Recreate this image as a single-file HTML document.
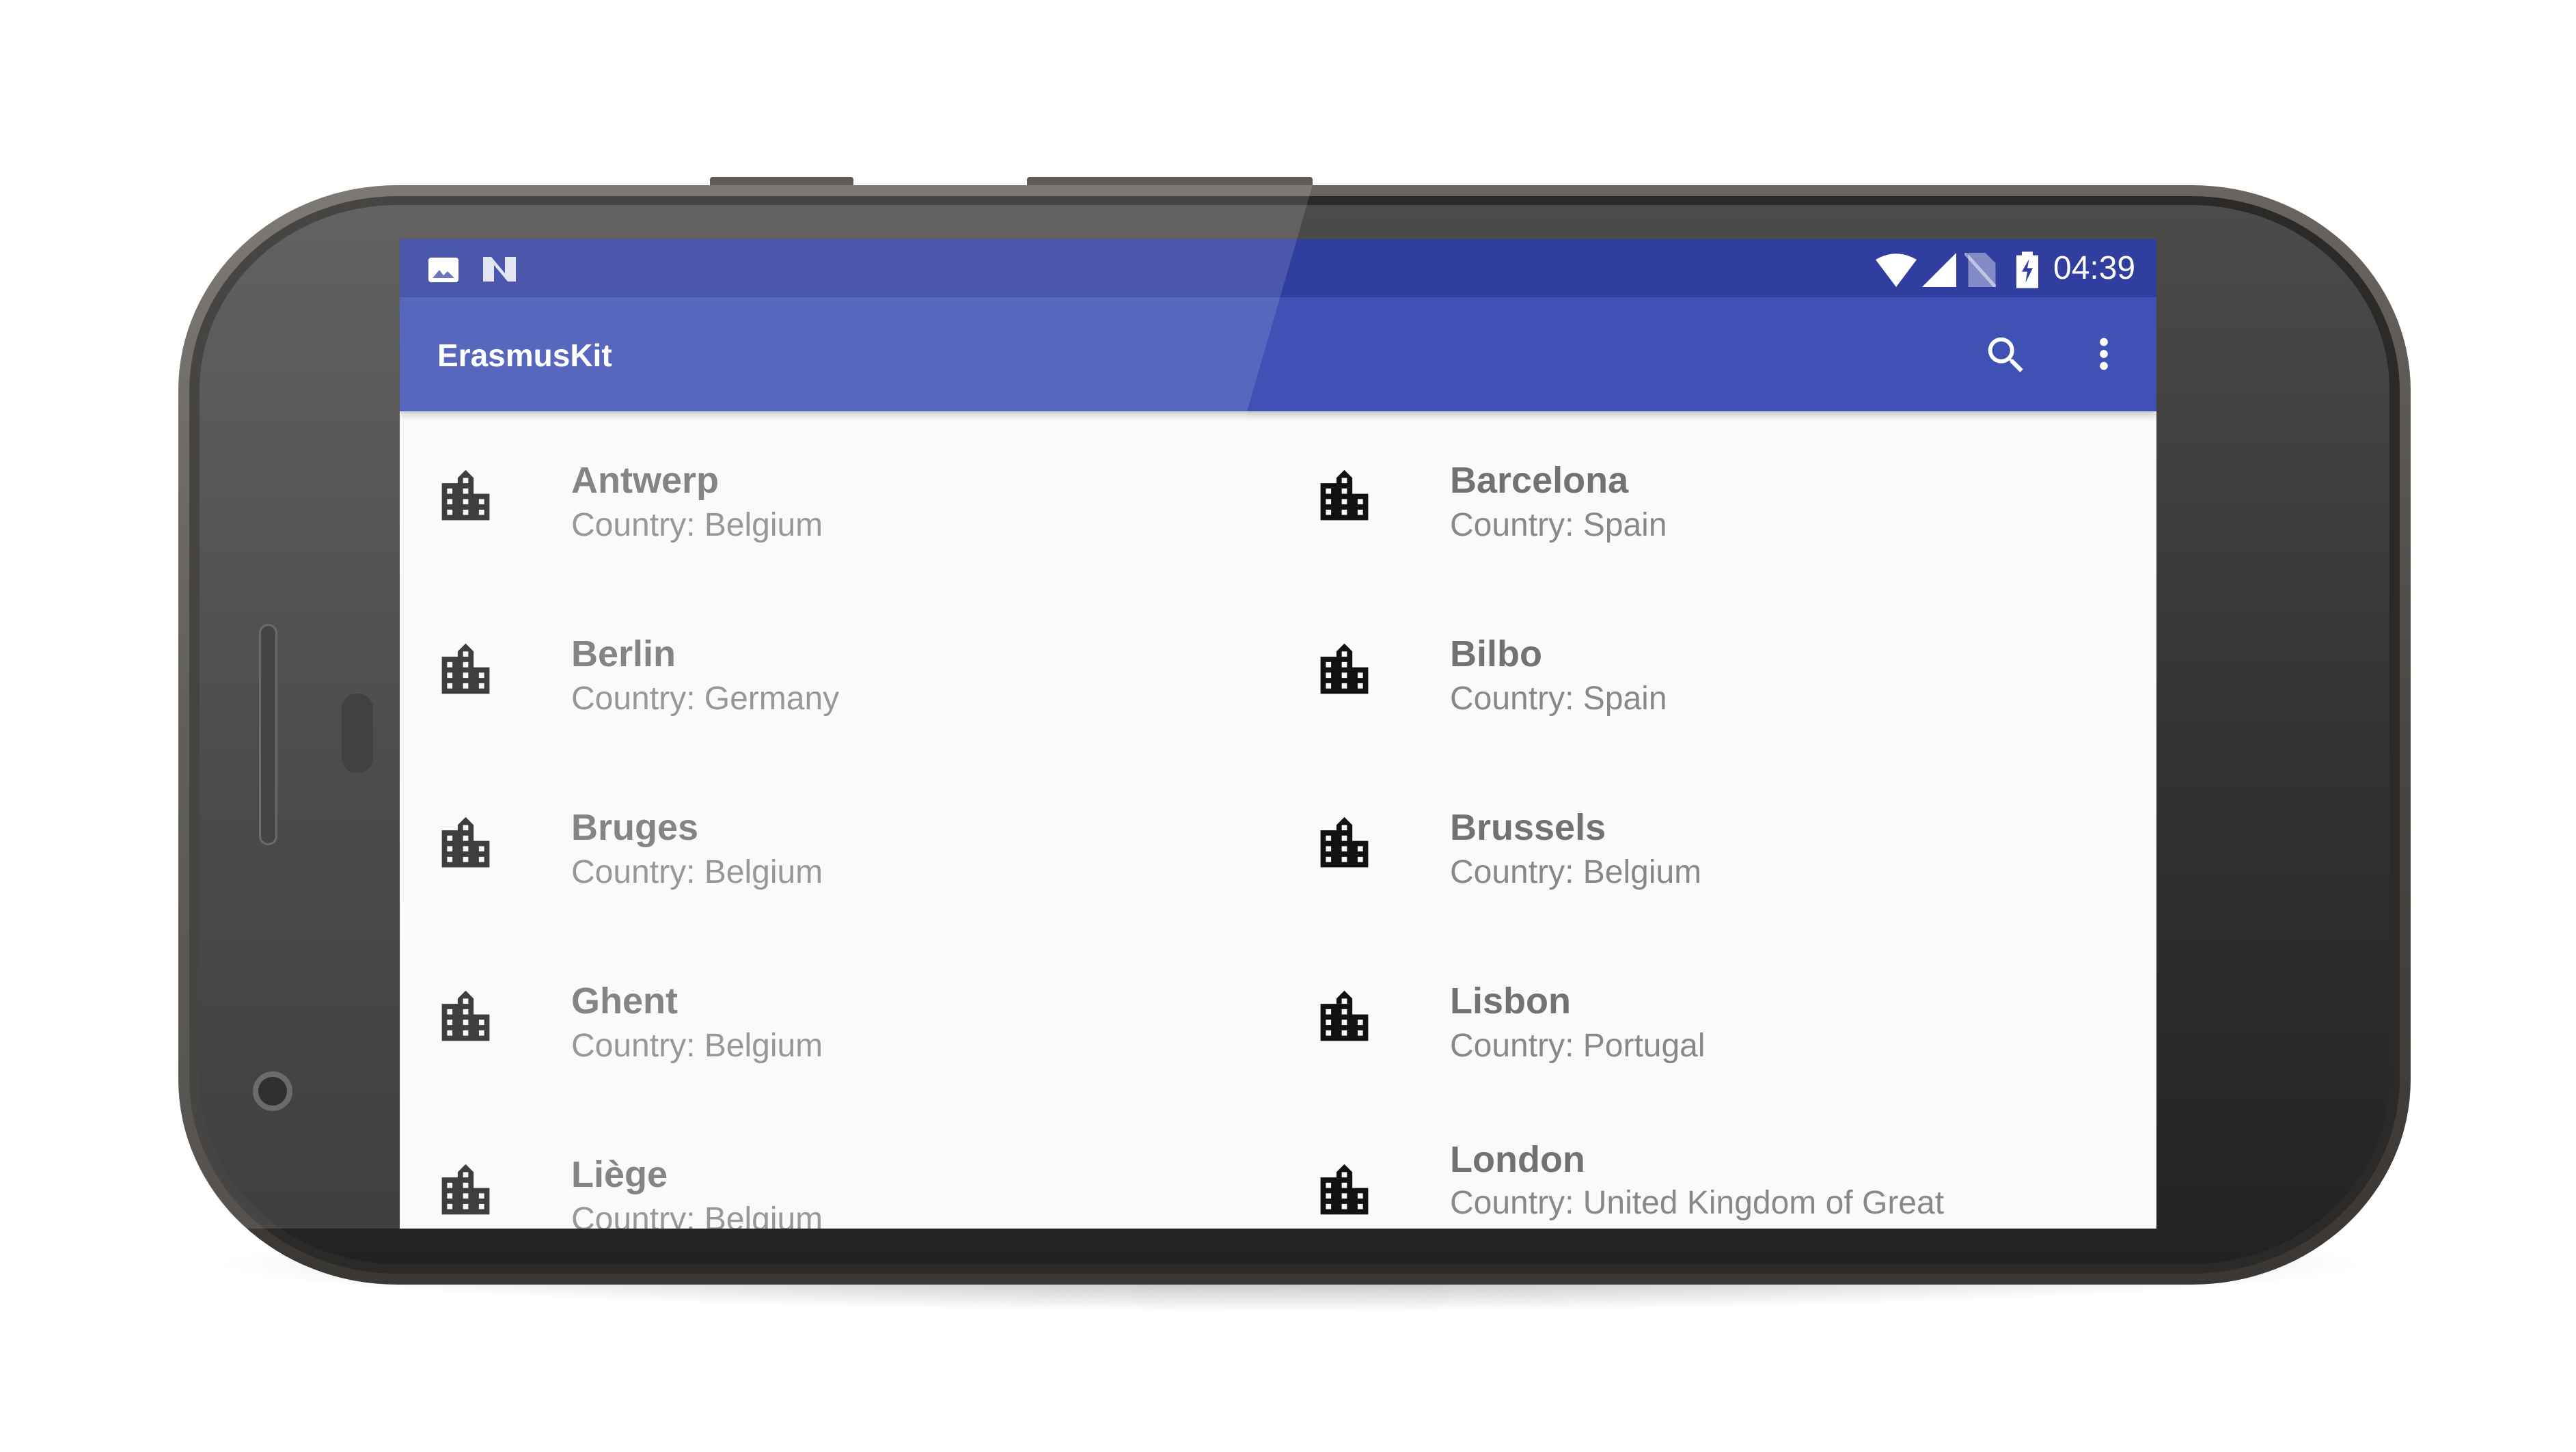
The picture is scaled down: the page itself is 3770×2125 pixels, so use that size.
<!DOCTYPE html>
<html><head><meta charset="utf-8"><style>
*{margin:0;padding:0;box-sizing:border-box}
body{width:3770px;height:2125px;background:#fff;position:relative;overflow:hidden;font-family:"Liberation Sans",sans-serif}
.abs{position:absolute}
.shadow{left:300px;top:1780px;width:3180px;height:140px;border-radius:50%;background:radial-gradient(ellipse at center,rgba(0,0,0,.35),rgba(0,0,0,0) 70%)}
.body{left:261px;top:271px;width:3267px;height:1609px;border-radius:320px/300px;background:linear-gradient(#6a6560,#4a4643 50%,#3a3734);}
.rim{left:277px;top:287px;width:3235px;height:1577px;border-radius:305px/285px;background:#2c2a28}
.face{left:292px;top:300px;width:3205px;height:1550px;border-radius:290px/270px;background:linear-gradient(180deg,#4c4b4a 0%,#343332 50%,#232221 100%)}
.btn{background:#5d5a57;height:14px;top:259px;border-radius:4px 4px 0 0}
.screen{left:585px;top:350px;width:2571px;height:1448px;background:#fafafa;overflow:hidden}
.status{left:0;top:0;width:100%;height:85px;background:#303f9f}
.bar{left:0;top:85px;width:100%;height:167px;background:#3f51b5;box-shadow:0 6px 10px rgba(0,0,0,.2)}
.title{left:55px;top:58px;color:#fff;font-size:46px;font-weight:bold}
.item{position:absolute;width:1285px;height:254px}
.item svg{position:absolute;left:50px;top:58px}
.item .t{position:absolute;left:251px;top:50px;font-size:54px;font-weight:bold;color:#727272}
.item .s{position:absolute;left:251px;top:119px;font-size:48px;color:#888;white-space:nowrap}
.glare{left:0;top:0;width:3770px;height:2125px;pointer-events:none}
</style></head><body>
<div class="abs shadow"></div>
<div class="abs btn" style="left:1039px;width:210px"></div>
<div class="abs btn" style="left:1503px;width:418px"></div>
<div class="abs body"></div>
<div class="abs rim"></div>
<div class="abs face"></div>
<div class="abs" style="left:379px;top:913px;width:27px;height:324px;border-radius:14px;background:#2a2928;border:3px solid #555"></div>
<div class="abs" style="left:500px;top:1015px;width:46px;height:116px;border-radius:22px;background:#262524"></div>
<div class="abs" style="left:370px;top:1568px;width:58px;height:58px;border-radius:50%;background:#111;border:8px solid #555"></div>
<div class="abs screen">
 <div class="abs status">
  <svg class="abs" style="left:40px;top:25px" width="48" height="40" viewBox="0 0 24 20"><rect x="1" y="1" width="22" height="18" rx="2" fill="#fff"/><path d="M4 16l5-6 3 4 3-3 5 5z" fill="#5563b0"/></svg>
  <svg class="abs" style="left:118px;top:22px" width="56" height="44" viewBox="0 0 28 22"><path d="M2 2h6l10 12V2h8v18h-6L10 8v12H2z" fill="#fff" opacity=".85"/></svg>
  <svg class="abs" style="left:2150px;top:20px" width="80" height="50" viewBox="0 0 32 20"><path d="M4 4Q16-3 28 4L16 20z" fill="#fff"/></svg>
  <svg class="abs" style="left:2228px;top:20px" width="50" height="50" viewBox="0 0 20 20"><path d="M20 0V20H0z" fill="#fff"/></svg>
  <svg class="abs" style="left:2290px;top:20px" width="46" height="50" viewBox="0 0 18 20"><path d="M2 0h10l6 6v14H2z" fill="#fff" opacity=".4"/><path d="M0 0L18 20" stroke="#fff" stroke-width="2" opacity=".5"/></svg>
  <svg class="abs" style="left:2366px;top:18px" width="32" height="54" viewBox="0 0 12 20"><path d="M3 0h6v2h3v18H0V2h3z" fill="#fff"/><path d="M7 4L3 11h3l-1 6 4-8H6z" fill="#303f9f"/></svg>
  <div class="abs" style="left:2420px;top:15px;color:#fff;font-size:48px">04:39</div>
 </div>
 <div class="abs bar">
  <div class="abs title">ErasmusKit</div>
  <svg class="abs" style="left:2316px;top:50px" width="70" height="70" viewBox="0 0 24 24"><path fill="#fff" d="M15.5 14h-.79l-.28-.27A6.47 6.47 0 0 0 16 9.5 6.5 6.5 0 1 0 9.5 16c1.61 0 3.09-.59 4.23-1.57l.27.28v.79l5 4.99L20.49 19l-4.99-5zm-6 0C7.01 14 5 11.99 5 9.5S7.01 5 9.5 5 14 7.01 14 9.5 11.99 14 9.5 14z"/></svg>
  <svg class="abs" style="left:2459px;top:48px" width="70" height="70" viewBox="0 0 24 24"><path fill="#fff" d="M12 8c1.1 0 2-.9 2-2s-.9-2-2-2-2 .9-2 2 .9 2 2 2zm0 2c-1.1 0-2 .9-2 2s.9 2 2 2 2-.9 2-2-.9-2-2-2zm0 6c-1.1 0-2 .9-2 2s.9 2 2 2 2-.9 2-2-.9-2-2-2z"/></svg>
 </div>
 <div class="item" style="left:0;top:272px"><svg width="93" height="93" viewBox="0 0 24 24"><path d="M15 11V5l-3-3-3 3v2H3v14h18V11h-6zm-8 8H5v-2h2v2zm0-4H5v-2h2v2zm0-4H5V9h2v2zm6 8h-2v-2h2v2zm0-4h-2v-2h2v2zm0-4h-2V9h2v2zm0-4h-2V5h2v2zm6 12h-2v-2h2v2zm0-4h-2v-2h2v2z" fill="#222"/></svg><div class="t">Antwerp</div><div class="s">Country: Belgium</div></div>
 <div class="item" style="left:1286px;top:272px"><svg width="93" height="93" viewBox="0 0 24 24"><path d="M15 11V5l-3-3-3 3v2H3v14h18V11h-6zm-8 8H5v-2h2v2zm0-4H5v-2h2v2zm0-4H5V9h2v2zm6 8h-2v-2h2v2zm0-4h-2v-2h2v2zm0-4h-2V9h2v2zm0-4h-2V5h2v2zm6 12h-2v-2h2v2zm0-4h-2v-2h2v2z" fill="#111"/></svg><div class="t">Barcelona</div><div class="s">Country: Spain</div></div>
 <div class="item" style="left:0;top:526px"><svg width="93" height="93" viewBox="0 0 24 24"><path d="M15 11V5l-3-3-3 3v2H3v14h18V11h-6zm-8 8H5v-2h2v2zm0-4H5v-2h2v2zm0-4H5V9h2v2zm6 8h-2v-2h2v2zm0-4h-2v-2h2v2zm0-4h-2V9h2v2zm0-4h-2V5h2v2zm6 12h-2v-2h2v2zm0-4h-2v-2h2v2z" fill="#222"/></svg><div class="t">Berlin</div><div class="s">Country: Germany</div></div>
 <div class="item" style="left:1286px;top:526px"><svg width="93" height="93" viewBox="0 0 24 24"><path d="M15 11V5l-3-3-3 3v2H3v14h18V11h-6zm-8 8H5v-2h2v2zm0-4H5v-2h2v2zm0-4H5V9h2v2zm6 8h-2v-2h2v2zm0-4h-2v-2h2v2zm0-4h-2V9h2v2zm0-4h-2V5h2v2zm6 12h-2v-2h2v2zm0-4h-2v-2h2v2z" fill="#111"/></svg><div class="t">Bilbo</div><div class="s">Country: Spain</div></div>
 <div class="item" style="left:0;top:780px"><svg width="93" height="93" viewBox="0 0 24 24"><path d="M15 11V5l-3-3-3 3v2H3v14h18V11h-6zm-8 8H5v-2h2v2zm0-4H5v-2h2v2zm0-4H5V9h2v2zm6 8h-2v-2h2v2zm0-4h-2v-2h2v2zm0-4h-2V9h2v2zm0-4h-2V5h2v2zm6 12h-2v-2h2v2zm0-4h-2v-2h2v2z" fill="#222"/></svg><div class="t">Bruges</div><div class="s">Country: Belgium</div></div>
 <div class="item" style="left:1286px;top:780px"><svg width="93" height="93" viewBox="0 0 24 24"><path d="M15 11V5l-3-3-3 3v2H3v14h18V11h-6zm-8 8H5v-2h2v2zm0-4H5v-2h2v2zm0-4H5V9h2v2zm6 8h-2v-2h2v2zm0-4h-2v-2h2v2zm0-4h-2V9h2v2zm0-4h-2V5h2v2zm6 12h-2v-2h2v2zm0-4h-2v-2h2v2z" fill="#111"/></svg><div class="t">Brussels</div><div class="s">Country: Belgium</div></div>
 <div class="item" style="left:0;top:1034px"><svg width="93" height="93" viewBox="0 0 24 24"><path d="M15 11V5l-3-3-3 3v2H3v14h18V11h-6zm-8 8H5v-2h2v2zm0-4H5v-2h2v2zm0-4H5V9h2v2zm6 8h-2v-2h2v2zm0-4h-2v-2h2v2zm0-4h-2V9h2v2zm0-4h-2V5h2v2zm6 12h-2v-2h2v2zm0-4h-2v-2h2v2z" fill="#222"/></svg><div class="t">Ghent</div><div class="s">Country: Belgium</div></div>
 <div class="item" style="left:1286px;top:1034px"><svg width="93" height="93" viewBox="0 0 24 24"><path d="M15 11V5l-3-3-3 3v2H3v14h18V11h-6zm-8 8H5v-2h2v2zm0-4H5v-2h2v2zm0-4H5V9h2v2zm6 8h-2v-2h2v2zm0-4h-2v-2h2v2zm0-4h-2V9h2v2zm0-4h-2V5h2v2zm6 12h-2v-2h2v2zm0-4h-2v-2h2v2z" fill="#111"/></svg><div class="t">Lisbon</div><div class="s">Country: Portugal</div></div>
 <div class="item" style="left:0;top:1288px"><svg width="93" height="93" viewBox="0 0 24 24"><path d="M15 11V5l-3-3-3 3v2H3v14h18V11h-6zm-8 8H5v-2h2v2zm0-4H5v-2h2v2zm0-4H5V9h2v2zm6 8h-2v-2h2v2zm0-4h-2v-2h2v2zm0-4h-2V9h2v2zm0-4h-2V5h2v2zm6 12h-2v-2h2v2zm0-4h-2v-2h2v2z" fill="#222"/></svg><div class="t">Liège</div><div class="s">Country: Belgium</div></div>
 <div class="item" style="left:1286px;top:1288px"><svg width="93" height="93" viewBox="0 0 24 24"><path d="M15 11V5l-3-3-3 3v2H3v14h18V11h-6zm-8 8H5v-2h2v2zm0-4H5v-2h2v2zm0-4H5V9h2v2zm6 8h-2v-2h2v2zm0-4h-2v-2h2v2zm0-4h-2V9h2v2zm0-4h-2V5h2v2zm6 12h-2v-2h2v2zm0-4h-2v-2h2v2z" fill="#111"/></svg><div class="t" style="top:28px">London</div><div class="s" style="top:88px;line-height:70px">Country: United Kingdom of Great<br>Britain and Northern Ireland</div></div>
</div>
<svg class="abs glare" viewBox="0 0 3770 2125"><polygon points="261,271 1921,271 1825,602 1825,1798 261,1798" fill="#fff" opacity=".13"/></svg>
</body></html>
